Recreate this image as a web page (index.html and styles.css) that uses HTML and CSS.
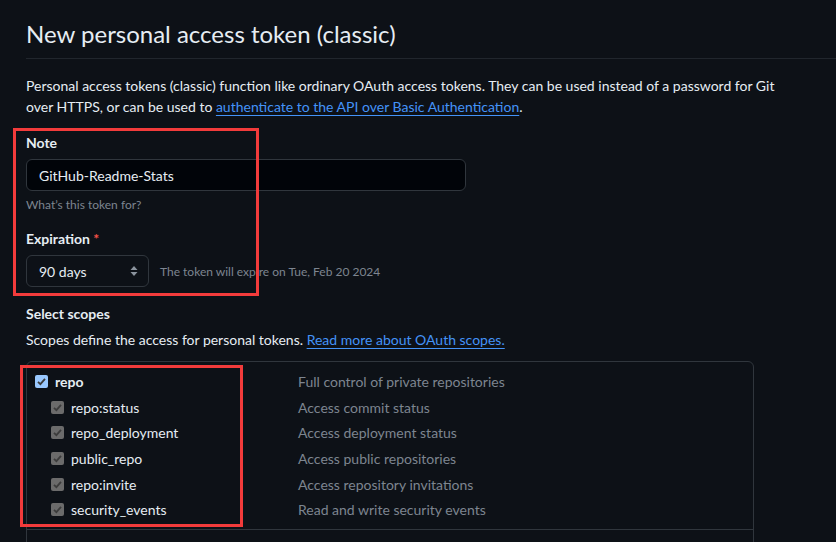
FILE: index.html
```html
<!DOCTYPE html>
<html lang="en">
<head>
<meta charset="utf-8">
<title>New personal access token (classic)</title>
<link rel="stylesheet" href="styles.css">
</head>
<body>
<main class="page">
  <h1 class="subhead">New personal access token (classic)</h1>
  <p class="intro">Personal access tokens (classic) function like ordinary OAuth access tokens. They can be used instead of a password for Git<br>over HTTPS, or can be used to <a href="#" class="link">authenticate to the API over Basic Authentication</a>.</p>

  <div class="field field-note">
    <label class="label">Note</label>
    <div class="input">GitHub-Readme-Stats</div>
    <p class="hint">What’s this token for?</p>
  </div>

  <div class="field field-exp">
    <label class="label">Expiration <span class="req">*</span></label>
    <div class="exp-row">
      <div class="select">
        <span>90 days</span>
        <svg class="caret" width="8" height="12" viewBox="0 0 8 12"><path d="M4 1 L7.5 5 H0.5 Z M4 11 L7.5 7 H0.5 Z" fill="#8b949e"/></svg>
      </div>
      <span class="exp-note">The token will expire on Tue, Feb 20 2024</span>
    </div>
  </div>

  <h2 class="label scopes-title">Select scopes</h2>
  <p class="scopes-text">Scopes define the access for personal tokens. <a href="#" class="link">Read more about OAuth scopes.</a></p>

  <div class="scopes">
    <div class="group">
      <div class="row">
        <span class="name main"><span class="cb cb-on"><svg viewBox="0 0 13 13"><path d="M3 6.8 L5.4 9.2 L10 3.8" fill="none" stroke="#3a3a3a" stroke-width="1.8"/></svg></span>repo</span>
        <span class="desc">Full control of private repositories</span>
      </div>
      <div class="row">
        <span class="name sub"><span class="cb cb-dis"><svg viewBox="0 0 13 13"><path d="M3 6.8 L5.4 9.2 L10 3.8" fill="none" stroke="#3c3c3c" stroke-width="1.8"/></svg></span>repo:status</span>
        <span class="desc">Access commit status</span>
      </div>
      <div class="row">
        <span class="name sub"><span class="cb cb-dis"><svg viewBox="0 0 13 13"><path d="M3 6.8 L5.4 9.2 L10 3.8" fill="none" stroke="#3c3c3c" stroke-width="1.8"/></svg></span>repo_deployment</span>
        <span class="desc">Access deployment status</span>
      </div>
      <div class="row">
        <span class="name sub"><span class="cb cb-dis"><svg viewBox="0 0 13 13"><path d="M3 6.8 L5.4 9.2 L10 3.8" fill="none" stroke="#3c3c3c" stroke-width="1.8"/></svg></span>public_repo</span>
        <span class="desc">Access public repositories</span>
      </div>
      <div class="row">
        <span class="name sub"><span class="cb cb-dis"><svg viewBox="0 0 13 13"><path d="M3 6.8 L5.4 9.2 L10 3.8" fill="none" stroke="#3c3c3c" stroke-width="1.8"/></svg></span>repo:invite</span>
        <span class="desc">Access repository invitations</span>
      </div>
      <div class="row">
        <span class="name sub"><span class="cb cb-dis"><svg viewBox="0 0 13 13"><path d="M3 6.8 L5.4 9.2 L10 3.8" fill="none" stroke="#3c3c3c" stroke-width="1.8"/></svg></span>security_events</span>
        <span class="desc">Read and write security events</span>
      </div>
    </div>
    <div class="group next"></div>
  </div>

  <div class="mark mark-1"></div>
  <div class="mark mark-2"></div>
</main>
</body>
</html>
```

FILE: styles.css
```css
* { box-sizing: border-box; }
html, body {
  margin: 0;
  background: #0d1117;
  height: 100%;
  overflow: hidden;
}
body {
  font-family: "Lato", "Noto Sans", sans-serif;
  font-size: 14px;
  color: #e6edf3;
}
.page {
  position: relative;
  padding-left: 26px;
}
.subhead {
  margin: 0;
  padding-top: 16px;
  padding-bottom: 6px;
  font-size: 24px;
  line-height: 36px;
  font-weight: 400;
  border-bottom: 1px solid #21262d;
}
.intro {
  margin: 16px 0 0;
  line-height: 21px;
}
.link {
  color: #4493f8;
  text-decoration: underline;
  text-underline-offset: 3px;
}
.field-note { margin-top: 15px; }
.field-exp { margin-top: 14px; }
.label {
  display: block;
  margin: 0;
  font-size: 14px;
  font-weight: 700;
  line-height: 21px;
}
.req { color: #f85149; }
.input {
  margin-top: 6px;
  width: 440px;
  height: 32px;
  padding: 0 12px;
  display: flex;
  align-items: center;
  background: #010409;
  border: 1px solid #30363d;
  border-radius: 6px;
}
.hint {
  margin: 5px 0 0;
  font-size: 12px;
  line-height: 18px;
  color: #7d8590;
}
.exp-row {
  margin-top: 6px;
  display: flex;
  align-items: center;
  gap: 11px;
}
.select {
  width: 123px;
  height: 32px;
  padding: 0 10px 0 12px;
  display: flex;
  align-items: center;
  justify-content: space-between;
  background: #0d1117;
  border: 1px solid #30363d;
  border-radius: 6px;
}
.exp-note {
  font-size: 12px;
  color: #7d8590;
}
.scopes-title { margin-top: 16px; }
.scopes-text {
  margin: 5px 0 0;
  line-height: 21px;
}
.scopes {
  margin-top: 11px;
  width: 728px;
  border: 1px solid #30363d;
  border-radius: 6px 6px 0 0;
  height: 400px;
}
.group {
  padding: 7px 8px 6px;
  border-bottom: 1px solid #30363d;
}
.row {
  display: grid;
  grid-template-columns: 263px 1fr;
  height: 25.6px;
  align-items: center;
}
.name {
  display: flex;
  align-items: center;
  gap: 7px;
}
.main { font-weight: 700; }
.sub { padding-left: 16px; }
.desc { color: #7d8590; }
.cb {
  width: 13px;
  height: 13px;
  border-radius: 2px;
  display: inline-flex;
}
.cb svg { width: 13px; height: 13px; }
.cb-on { background: #99c8ff; }
.cb-dis { background: #6b6b6b; }
.mark {
  position: absolute;
  border: 3px solid #f23b3b;
  pointer-events: none;
}
.mark-1 { left: 13px; top: 128px; width: 246px; height: 168px; }
.mark-2 { left: 20px; top: 365px; width: 223px; height: 162px; }
```
